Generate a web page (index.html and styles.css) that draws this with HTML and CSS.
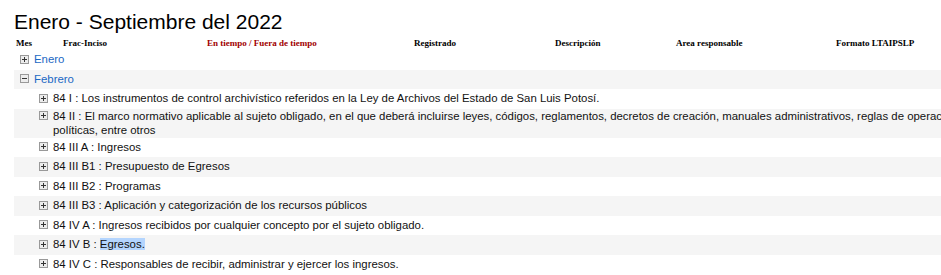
FILE: index.html
```html
<!DOCTYPE html>
<html lang="es">
<head>
<meta charset="utf-8">
<title>Enero - Septiembre del 2022</title>
<link rel="stylesheet" href="styles.css">
</head>
<body>
<div class="page">
  <h1 class="title">Enero - Septiembre del 2022</h1>
  <div class="head">
    <div class="hc">Mes</div>
    <div class="hc">Frac-Inciso</div>
    <div class="hc red">En tiempo / Fuera de tiempo</div>
    <div class="hc">Registrado</div>
    <div class="hc">Descripción</div>
    <div class="hc">Area responsable</div>
    <div class="hc">Formato LTAIPSLP</div>
  </div>
  <ul class="tree">
    <li>
      <div class="row top">
        <div class="item">
          <svg class="tg" viewBox="0 0 9 9" width="9" height="9"><rect x="0.5" y="0.5" width="8" height="8" fill="#ececec" stroke="#999"/><path d="M2 4.5h5M4.5 2v5" stroke="#333"/></svg>
          <a class="month" href="#">Enero</a>
        </div>
      </div>
    </li>
    <li>
      <div class="row top">
        <div class="item">
          <svg class="tg" viewBox="0 0 9 9" width="9" height="9"><rect x="0.5" y="0.5" width="8" height="8" fill="#ececec" stroke="#999"/><path d="M2 4.5h5" stroke="#333"/></svg>
          <a class="month" href="#">Febrero</a>
        </div>
      </div>
      <ul class="sub">
        <li><div class="row"><div class="item"><svg class="tg" viewBox="0 0 9 9" width="9" height="9"><rect x="0.5" y="0.5" width="8" height="8" fill="#ececec" stroke="#999"/><path d="M2 4.5h5M4.5 2v5" stroke="#333"/></svg><span class="lbl">84 I : Los instrumentos de control archivístico referidos en la Ley de Archivos del Estado de San Luis Potosí.</span></div></div></li>
        <li><div class="row"><div class="item"><svg class="tg" viewBox="0 0 9 9" width="9" height="9"><rect x="0.5" y="0.5" width="8" height="8" fill="#ececec" stroke="#999"/><path d="M2 4.5h5M4.5 2v5" stroke="#333"/></svg><span class="lbl">84 II : El marco normativo aplicable al sujeto obligado, en el que deberá incluirse leyes, códigos, reglamentos, decretos de creación, manuales administrativos, reglas de operación, políticas, entre otros</span></div></div></li>
        <li><div class="row"><div class="item"><svg class="tg" viewBox="0 0 9 9" width="9" height="9"><rect x="0.5" y="0.5" width="8" height="8" fill="#ececec" stroke="#999"/><path d="M2 4.5h5M4.5 2v5" stroke="#333"/></svg><span class="lbl">84 III A : Ingresos</span></div></div></li>
        <li><div class="row"><div class="item"><svg class="tg" viewBox="0 0 9 9" width="9" height="9"><rect x="0.5" y="0.5" width="8" height="8" fill="#ececec" stroke="#999"/><path d="M2 4.5h5M4.5 2v5" stroke="#333"/></svg><span class="lbl">84 III B1 : Presupuesto de Egresos</span></div></div></li>
        <li><div class="row"><div class="item"><svg class="tg" viewBox="0 0 9 9" width="9" height="9"><rect x="0.5" y="0.5" width="8" height="8" fill="#ececec" stroke="#999"/><path d="M2 4.5h5M4.5 2v5" stroke="#333"/></svg><span class="lbl">84 III B2 : Programas</span></div></div></li>
        <li><div class="row"><div class="item"><svg class="tg" viewBox="0 0 9 9" width="9" height="9"><rect x="0.5" y="0.5" width="8" height="8" fill="#ececec" stroke="#999"/><path d="M2 4.5h5M4.5 2v5" stroke="#333"/></svg><span class="lbl">84 III B3 : Aplicación y categorización de los recursos públicos</span></div></div></li>
        <li><div class="row"><div class="item"><svg class="tg" viewBox="0 0 9 9" width="9" height="9"><rect x="0.5" y="0.5" width="8" height="8" fill="#ececec" stroke="#999"/><path d="M2 4.5h5M4.5 2v5" stroke="#333"/></svg><span class="lbl">84 IV A : Ingresos recibidos por cualquier concepto por el sujeto obligado.</span></div></div></li>
        <li><div class="row"><div class="item"><svg class="tg" viewBox="0 0 9 9" width="9" height="9"><rect x="0.5" y="0.5" width="8" height="8" fill="#ececec" stroke="#999"/><path d="M2 4.5h5M4.5 2v5" stroke="#333"/></svg><span class="lbl">84 IV B : <span class="sel">Egresos.</span></span></div></div></li>
        <li><div class="row"><div class="item"><svg class="tg" viewBox="0 0 9 9" width="9" height="9"><rect x="0.5" y="0.5" width="8" height="8" fill="#ececec" stroke="#999"/><path d="M2 4.5h5M4.5 2v5" stroke="#333"/></svg><span class="lbl">84 IV C : Responsables de recibir, administrar y ejercer los ingresos.</span></div></div></li>
      </ul>
    </li>
  </ul>
</div>
</body>
</html>
```
FILE: styles.css
```css
html, body {
  margin: 0;
  padding: 0;
  background: #fff;
}
body {
  overflow: hidden;
  font-family: "Liberation Sans", Arial, Helvetica, sans-serif;
  color: #111;
}
.page {
  width: 956px;
  padding: 10px 0 0 14px;
}
.title {
  margin: 0;
  font-family: "Liberation Sans", Arial, sans-serif;
  font-weight: normal;
  font-size: 21px;
  line-height: 24px;
  color: #000;
}
.head {
  display: grid;
  grid-template-columns: 47px 144px 207px 141px 121px 160px 1fr;
  margin-top: 4px;
  height: 12px;
  font-family: "Liberation Serif", "Times New Roman", serif;
  font-weight: bold;
  font-size: 9px;
  line-height: 11px;
  color: #000;
}
.hc {
  padding-left: 2px;
  white-space: nowrap;
}
.hc.red {
  color: #a10000;
}
.tree, .sub {
  list-style: none;
  margin: 0;
  padding: 0;
}
.row {
  display: flex;
  align-items: center;
  min-height: 19.5px;
  padding: 0 0 1px;
  box-sizing: border-box;
  font-size: 11.4px;
  line-height: 14px;
}
li:nth-child(even) > .row {
  background: #f5f5f5;
}
.row.top {
  padding-left: 6px;
}
.sub .row {
  padding-left: 25px;
}
.item {
  display: flex;
  align-items: flex-start;
  gap: 5px;
}
.tg {
  flex: none;
  display: block;
  margin-top: 2.5px;
}
.month {
  color: #1b68c4;
  text-decoration: none;
}
.lbl {
  color: #111;
}
.sel {
  background: #b4d5fe;
}
```
